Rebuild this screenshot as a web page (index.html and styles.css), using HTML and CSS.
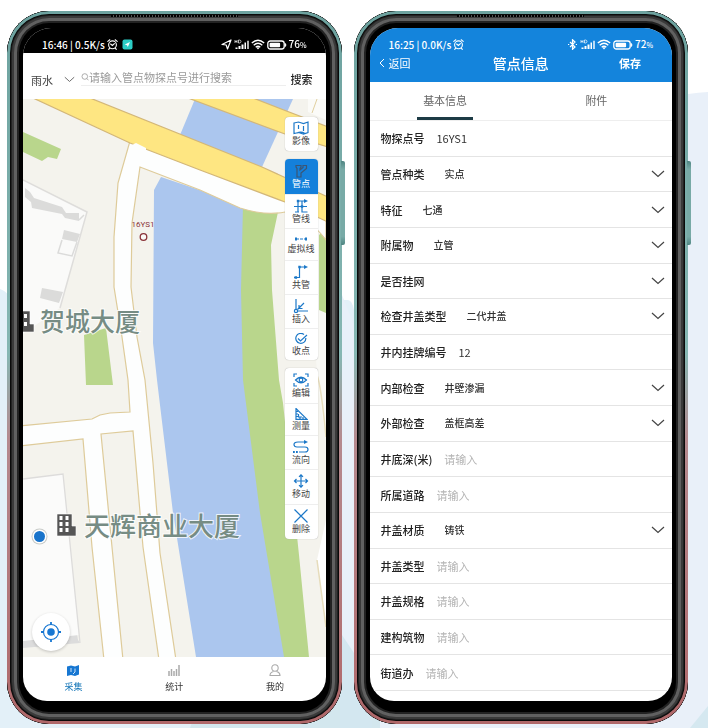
FILE: index.html
```html
<!DOCTYPE html>
<html lang="zh-CN">
<head>
<meta charset="utf-8">
<meta name="viewport" content="width=device-width, initial-scale=1">
<title>管点采集</title>
<link rel="stylesheet" href="styles.css">
</head>
<body>
<svg class="backdrop" viewBox="0 0 708 728" preserveAspectRatio="none" aria-hidden="true">
  <path d="M0 289Q6 291 9 296L348 300Q352 300 354 310V728H0Z" fill="#e3f0f8"/>
  <path d="M340 290L356 330V728H340Z" fill="#e8f0f9"/>
  <path d="M670 98Q688 93 708 92V728H350V400Z" fill="#e9f0f9"/>
  <path d="M190 728L200 700H380V728Z" fill="#d3e7ee"/>
  <path d="M340 632L372 680V728H340Z" fill="#d3e7f0"/>
  <path d="M690 728L708 706V728Z" fill="#d5e8f0"/>
</svg>

<svg class="defs" aria-hidden="true">
  <symbol id="alarm" viewBox="0 0 11 11"><g fill="none" stroke="currentColor" stroke-width="1.1" stroke-linecap="round"><circle cx="5.500" cy="5.800" r="3.900"/><path d="M.8 2.400L2.800.8M10.200 2.400L8.200.8M3.600 5L5.400 6.500L7.400 4.600M2.500 9.300L1.700 10.300M8.500 9.300L9.300 10.300"/></g></symbol>
  <symbol id="signal" viewBox="0 0 15 11"><g fill="currentColor"><path d="M1 1v3M3 1v3M1 2.500h2M4.500 1v3h1Q7 3.800 7 2.500T5.500 1Z" fill="none" stroke="currentColor" stroke-width=".7"/><path d="M1.500 8.500h2V10h-2zM4.500 7h2v3h-2zM7.500 5.500h2V10h-2zM10.500 3.500h1.500V10h-1.500zM13.300 1.800h1.400V10h-1.400z"/></g></symbol>
  <symbol id="wifi" viewBox="0 0 14 11"><g fill="none" stroke="currentColor" stroke-width="1.400"><path d="M.8 4Q7-1.400 13.200 4M2.700 6.200Q7 2.300 11.300 6.200M4.700 8.200Q7 6.200 9.300 8.200"/></g><path d="M5.500 8.800Q7 7.800 8.500 8.800L7 10.500Z" fill="currentColor"/></symbol>
  <symbol id="battery" viewBox="0 0 20 10"><rect x=".8" y="1" width="16.400" height="8" rx="2.500" fill="none" stroke="currentColor" stroke-width="1.300"/><rect x="2.600" y="2.800" width="10.500" height="4.400" rx="1" fill="currentColor"/><path d="M18.300 3.500Q19.600 5 18.300 6.500Z" fill="currentColor" stroke="currentColor"/></symbol>
  <symbol id="chevron" viewBox="0 0 14 8"><path d="M1 1L7 6.500L13 1" fill="none" stroke="currentColor" stroke-width="1.200"/></symbol>
</svg>

<main class="stage">
  <section class="phone" aria-label="地图采集">
    <i class="speaker"></i>
    <div class="screen">
      <div class="status status-dark">
        <span class="clock">16:46 | 0.5K/s</span>
        <svg class="i11"><use href="#alarm"/></svg>
        <svg class="i11 app" viewBox="0 0 11 11"><rect x=".5" y=".5" width="10" height="10" rx="2" fill="#2ccdc6"/><path d="M2.800 5.500L8 3L5.800 8L5 6.200Z" fill="#fff"/></svg>
        <span class="grow"></span>
        <svg class="i11" viewBox="0 0 11 11"><path d="M1 5.500L10 1L6.500 10L5.200 6Z" fill="none" stroke="currentColor" stroke-width="1.200" stroke-linejoin="round"/></svg>
        <svg class="i15"><use href="#signal"/></svg>
        <svg class="i14"><use href="#wifi"/></svg>
        <svg class="i20"><use href="#battery"/></svg>
        <span class="charge">76<small>%</small></span>
      </div>

      <form class="search" onsubmit="return false">
        <span class="kind">
          <select aria-label="管线类型"><option>雨水</option></select>
          <svg viewBox="0 0 14 8"><use href="#chevron"/></svg>
        </span>
        <label class="query">
          <svg viewBox="0 0 8 8"><circle cx="3.800" cy="3.500" r="2.800" fill="none" stroke="#999" stroke-width=".8"/><path d="M5.800 5.500L7.500 7.300" stroke="#999" stroke-width=".8"/></svg>
          <input type="text" aria-label="物探点号" placeholder="请输入管点物探点号进行搜索">
        </label>
        <button type="submit">搜索</button>
      </form>

      <div class="map">
        <svg class="tiles" viewBox="23 99 303 558" preserveAspectRatio="xMinYMin slice">
          <rect x="23" y="99" width="303" height="558" fill="#f4f3ed"/>
          <path d="M310 213L326 222V437Q318 400 314 330Z" fill="#f8f8f4"/>
          <path d="M317 560L326 627V520Z" fill="#fff"/>
          <path d="M317 375Q321 385 326 437M317 560L326 627" fill="none" stroke="#e6dcbb" stroke-width="1.500"/>
          <path d="M308 99H326V120L308 112Z" fill="#fbfbf8"/>
          <path d="M317 99L312 113" stroke="#e0cf9e"/>
          <!-- river -->
          <path d="M195 99H293L262 167L180 135Z" fill="#abc6ee"/>
          <path d="M161 177L154 190L153 343L157 380L163 430L173 513L196 657H285L261 513L244 380L242 290L244 205Z" fill="#abc6ee"/>
          <!-- green land -->
          <path d="M243 205L278 212L271 245L272 290L279 380L283 403L299 555L309 657H284L260 513L243 380L241 290Z" fill="#b9d68c"/>
          <path d="M319 235L326 228V313L319 310Z" fill="#b9d68c"/>
          <path d="M23 132L61 149L57 159L48 157L42 161L23 152ZM84 335L106 328L113 385H86Z" fill="#b9d68c"/>
          <!-- buildings -->
          <path d="M23 180L87 212L60 308L23 334Z" fill="#fafaf9"/>
          <path d="M23 180L87 212L60 308" fill="none" stroke="#dedddb" stroke-width="1.500"/>
          <path d="M25 188L30 192L34 198L62 207L66 213H79V221L65 218L62 214L32 208L31 202L25 197ZM64 230L80 234L77 242L62 239ZM42 288L63 292L59 303L40 298Z" fill="#dbdbda"/>
          <path d="M62 240L58 253L72 256L77 242M79 220L84 215" fill="none" stroke="#dbdbda" stroke-width="1.500"/>
          <path d="M23 640L77 634L78 640L80 643L23 648Z" fill="#dcdcdc"/>
          <path d="M23 479L63 474L79 635L23 641Z" fill="#fbfbfa"/>
          <path d="M23 479L63 474L80 643" fill="none" stroke="#dddcdb" stroke-width="1.300"/>
          <!-- side streets -->
          <path d="M130 141L118 183L114 237V287L122 337L128 380L130 412L110 413L100 415L92 419L20 426V446L83 439L92 547L104 660H123L112 547L101 434L133 431L143 547L159 660H176L160 553L153 463L145 380L137 337L131 287L132 223L140 167L200 190L240 208Q265 216 285 212Q306 214 326 240V200L240 165Z" fill="#fdfefe" stroke="#decb9a" stroke-width="1.200"/>
          <!-- main roads -->
          <path d="M33 98L130 143L200 170L285 202L328 222V197L262 167L90 98ZM188 98L285 134L328 147V127L253 98Z" fill="#fee682" stroke="#d3b779" stroke-width="1.200"/>
          <path d="M132 145L136 143L146 148V153L137 158Z" fill="#fdfefe"/>
          <!-- place names -->
          <g fill="#555" stroke="#fff" stroke-width=".6">
            <path d="M22 311h8v13h4v8H22Z"/><path d="M57 514h15v12h4v10H57Z"/>
          </g>
          <path d="M24 314h3v4h-3zM24 322h3v4h-3zM59.500 516h3v4h-3zM65.500 516h3v4h-3zM59.500 522h3v4h-3zM65.500 522h3v4h-3zM59.500 528h3v4h-3zM65.500 528h3v4h-3z" fill="#fff"/>
          <g class="place"><text x="40" y="331">贺城大厦</text><text x="84" y="536" class="long">天辉商业大厦</text></g>
          <text class="point" x="143" y="227">16YS1</text>
          <circle cx="143.500" cy="237" r="3.300" fill="#fff" fill-opacity=".6" stroke="#8a3339" stroke-width="1.300"/>
          <circle cx="39.500" cy="536.500" r="8" fill="#c8cbc8"/><circle cx="39.500" cy="536.500" r="7" fill="#fff"/><circle cx="39.500" cy="536.500" r="5.500" fill="#1974cb"/>
        </svg>

        <div class="tools">
          <div class="group"><button class="medium"><svg viewBox="0 0 16 14"><path d="M1 2L5.500 1L10.500 2.500L15 1V11.500L10.500 13L5.500 11.500L1 12.500ZM5.500 4V8M10.500 5V10M4 12Q8 10 12 12.500"/></svg>影像</button></div>
          <div class="group">
            <button class="tall on"><svg viewBox="0 0 16 14"><path d="M4 13V4.500L3 3V1.500H8V3L7 4.500V6L10 3.500V1.500H13.500V4.500L8 9V13Z" stroke="#3b5574"/></svg>管点</button>
            <button class="medium"><svg viewBox="0 0 16 14"><path d="M5 13V2H12M2 13H6M1 7.500H14M9 2V13H14.500"/><path class="solid" d="M11 0L15 2L11 4ZM3.800 .8h2.400v2.400H3.800zM7.800 6.300h2.400v2.400H7.800z"/></svg>管线</button>
            <button class="short"><svg class="low" viewBox="0 0 16 8"><path d="M3 4H13" stroke-dasharray="3 1"/><path class="solid" d="M2 2.500h2v3H2zM12 2.500h2v3h-2z"/></svg>虚拟线</button>
            <button class="medium"><svg viewBox="0 0 16 14"><path d="M1 12.500H6.500V2H12"/><path class="solid" d="M11 0L15 2L11 4ZM1.500 11.200h2.600v2.600H1.500zM5.300 .8h2.400v2.400H5.300z"/></svg>共管</button>
            <button class="medium"><svg viewBox="0 0 16 14"><path d="M3 10.500V0M4.500 12H15M4.500 10.500L11 4M6 6V9.500H9.500"/><circle cx="3" cy="12" r="1.600"/></svg>插入</button>
            <button class="short"><svg class="small" viewBox="0 0 14 12"><path d="M10 1.500A5 5 0 1 0 11.800 5M4 5.500L6.500 8L13 2"/></svg>收点</button>
          </div>
          <div class="group">
            <button class="tall"><svg viewBox="0 0 16 14"><path d="M1 4V1H4M12 1H15V4M15 10V13H12M4 13H1V10M2.500 7Q8 1.500 13.500 7Q8 12.500 2.500 7Z"/><circle cx="8" cy="7" r="1.800"/></svg>编辑</button>
            <button class="short"><svg class="small" viewBox="0 0 14 12"><path d="M2 .5V11.300H13ZM4.500 6V9H8M2 3.500H4M2 6H4M2 8.500H4M6 11V9M9 11V9"/></svg>测量</button>
            <button class="medium"><svg viewBox="0 0 16 14"><path d="M5 2H12M5 2Q1 2 1 4.500T4 7H12Q15 7 15 9.500T12 12H6"/><path class="solid" d="M11 0L15 2L11 4ZM0 11h1.800v2H0zM3 11h1.800v2H3z"/></svg>流向</button>
            <button class="tall"><svg viewBox="0 0 16 14"><path d="M8 .8V13.200M1.500 7H14.500M6 2.800L8 .8L10 2.800M6 11.200L8 13.200L10 11.200M3.500 5L1.500 7L3.500 9M12.500 5L14.500 7L12.500 9"/></svg>移动</button>
            <button class="tall"><svg viewBox="0 0 16 14"><path d="M1.500 .5L14.500 13.500M14.500 .5L1.500 13.500"/></svg>删除</button>
          </div>
        </div>

        <button class="locate" aria-label="定位"><svg viewBox="0 0 20 20"><circle cx="10" cy="10" r="7.500" fill="none" stroke="#1777d2" stroke-width="1.200"/><circle cx="10" cy="10" r="3.800" fill="#1777d2"/><path d="M10 0V3M10 17V20M0 10H3M17 10H20" stroke="#1777d2" stroke-width="1.800"/></svg></button>
      </div>

      <nav class="tabbar">
        <a href="#collect" class="on"><svg viewBox="0 0 14 13"><path d="M1 2.500L5 1.500L9 2.500L13 1V10.500L9 12L5 11L1 12Z" fill="#1777d2"/><path d="M5 4V8M9 4.500V8L7 10" fill="none" stroke="#fff" stroke-width=".8"/></svg>采集</a>
        <a href="#stats"><svg viewBox="0 0 14 13"><path d="M2 7V12M4.500 5V12M7 7V12M9.500 5V12M12 1V12" stroke="#aaa" stroke-width="1.500"/></svg>统计</a>
        <a href="#me"><svg viewBox="0 0 14 13"><g fill="none" stroke="#aaa" stroke-width="1.100"><circle cx="7" cy="4" r="3.200"/><path d="M5.500 7.500Q2 8.500 2 11.500H12Q12 8.500 8.500 7.500"/></g></svg>我的</a>
      </nav>
    </div>
  </section>

  <section class="phone" aria-label="管点信息">
    <i class="speaker"></i>
    <div class="screen">
      <header class="top">
        <div class="status">
          <span class="clock">16:25 | 0.0K/s</span>
          <svg class="i11"><use href="#alarm"/></svg>
          <span class="grow"></span>
          <svg class="i11" viewBox="0 0 11 11"><path d="M3 3L8 8L5.500 10.300V.7L8 3L3 8M1 5.500h1.200M8.800 5.500H10" fill="none" stroke="currentColor" stroke-width="1.200"/></svg>
          <svg class="i15"><use href="#signal"/></svg>
          <svg class="i14"><use href="#wifi"/></svg>
          <svg class="i20"><use href="#battery"/></svg>
          <span class="charge">72<small>%</small></span>
        </div>
        <div class="titlebar">
          <button class="back"><svg viewBox="0 0 6 10"><path d="M5 1L1 5L5 9" fill="none" stroke="currentColor"/></svg>返回</button>
          <h1>管点信息</h1>
          <button class="save">保存</button>
        </div>
      </header>
      <div class="tabs" role="tablist">
        <button role="tab" aria-selected="true"><span>基本信息</span></button>
        <button role="tab" aria-selected="false"><span>附件</span></button>
      </div>
      <form class="fields">
        <div class="row"><label for="f1">物探点号</label><input id="f1" type="text" value="16YS1"></div>
        <div class="row"><label for="f2">管点种类</label><select id="f2"><option>实点</option></select><svg><use href="#chevron"/></svg></div>
        <div class="row"><label for="f3">特征</label><select id="f3"><option>七通</option></select><svg><use href="#chevron"/></svg></div>
        <div class="row"><label for="f4">附属物</label><select id="f4"><option>立管</option></select><svg><use href="#chevron"/></svg></div>
        <div class="row"><label for="f5">是否挂网</label><select id="f5"><option></option></select><svg><use href="#chevron"/></svg></div>
        <div class="row"><label for="f6">检查井盖类型</label><select id="f6"><option>二代井盖</option></select><svg><use href="#chevron"/></svg></div>
        <div class="row"><label for="f7">井内挂牌编号</label><input id="f7" type="text" value="12"></div>
        <div class="row"><label for="f8">内部检查</label><select id="f8"><option>井壁渗漏</option></select><svg><use href="#chevron"/></svg></div>
        <div class="row"><label for="f9">外部检查</label><select id="f9"><option>盖框高差</option></select><svg><use href="#chevron"/></svg></div>
        <div class="row"><label for="f10">井底深(米)</label><input id="f10" type="text" placeholder="请输入"></div>
        <div class="row"><label for="f11">所属道路</label><input id="f11" type="text" placeholder="请输入"></div>
        <div class="row"><label for="f12">井盖材质</label><select id="f12"><option>铸铁</option></select><svg><use href="#chevron"/></svg></div>
        <div class="row"><label for="f13">井盖类型</label><input id="f13" type="text" placeholder="请输入"></div>
        <div class="row"><label for="f14">井盖规格</label><input id="f14" type="text" placeholder="请输入"></div>
        <div class="row"><label for="f15">建构筑物</label><input id="f15" type="text" placeholder="请输入"></div>
        <div class="row"><label for="f16">街道办</label><input id="f16" type="text" placeholder="请输入"></div>
      </form>
    </div>
  </section>
</main>
</body>
</html>
```
FILE: styles.css
```css
* { box-sizing: border-box; }

body {
  margin: 0;
  background: #fff;
  color: #333;
  font: 11px/16px "Noto Sans CJK SC", sans-serif;
}

button, input, select {
  margin: 0;
  padding: 0;
  border: 0;
  border-radius: 0;
  background: none;
  color: inherit;
  font: inherit;
  outline: 0;
  appearance: none;
}

a { color: inherit; text-decoration: none; }
svg { flex: none; display: block; }

.defs { display: none; }

.backdrop {
  position: fixed;
  inset: 0;
  z-index: -1;
  width: 100%;
  height: 100%;
}

.stage {
  display: flex;
  gap: 12px;
  min-height: 100vh;
  padding: 11px 20px 4px 7px;
}

/* Handset: metal rim, grey bezel rings and the black surround */
.phone {
  position: relative;
  display: flex;
  flex: 1;
  min-width: 0;
  padding: 17px 16px 23px;
  border-radius: 42px;
  background: #000;
  box-shadow:
    inset 0 0 0 4px #0a0a0a,
    inset 0 0 0 5px #222,
    inset 0 0 0 7px #3a3a3a,
    inset 0 0 0 10px #606060,
    inset 0 0 0 12px #222;
}

.phone::before {
  content: "";
  position: absolute;
  inset: 0;
  border: 3px solid transparent;
  border-radius: 42px;
  background: linear-gradient(#6da29f 0, #86b7b3 48%, #b58a8f 60%, #b0686a 100%) border-box;
  mask: linear-gradient(#000 0 0) padding-box exclude, linear-gradient(#000 0 0);
}

.phone::after {
  content: "";
  position: absolute;
  top: 150px;
  right: -3px;
  width: 4px;
  height: 84px;
  border-radius: 0 2px 2px 0;
  background: linear-gradient(#4f8582, #78aaa6 10%, #78aaa6 90%, #4f8582);
}

.speaker {
  position: absolute;
  top: 4px;
  left: 31%;
  width: 38%;
  height: 2px;
  background: repeating-linear-gradient(90deg, #000 0 2px, #555 2px 3px);
}

.screen {
  position: relative;
  display: flex;
  flex: 1;
  flex-direction: column;
  min-width: 0;
  overflow: hidden;
  border-radius: 28px 28px 24px 24px;
  background: #fff;
}

.status {
  display: flex;
  flex: none;
  align-items: center;
  gap: 2px;
  height: 25px;
  padding: 8px 19px 0;
  color: #fff;
}

.status-dark { background: #000; }
.clock { font-size: 10px; font-weight: 500; white-space: nowrap; }
.grow { flex: 1; }
.app { margin-left: 2px; }
.charge { font-size: 10px; font-weight: 500; }
.charge small { font-size: 7px; }
.i11 { width: 11px; height: 11px; }
.i14 { width: 14px; height: 11px; }
.i15 { width: 15px; height: 11px; }
.i20 { width: 20px; height: 10px; }

/* Search row */
.search {
  display: flex;
  flex: none;
  align-items: center;
  height: 46px;
  padding: 3px 13px 0 8px;
}

.kind { display: flex; align-items: center; width: 50px; padding-top: 4px; }
.kind select { width: 33px; color: #444; }
.kind svg { width: 11px; height: 7px; color: #666; }

.query {
  display: flex;
  flex: 1;
  align-items: center;
  min-width: 0;
  margin-right: 5px;
  border-bottom: 1px solid #eee;
}

.query svg { width: 8px; height: 8px; }
.query input { flex: 1; min-width: 0; }
.query input::placeholder { color: #999; opacity: 1; }
.search button { padding-top: 2px; color: #222; font-weight: 500; }

/* Map */
.map { position: relative; flex: 1; min-height: 480px; overflow: hidden; }
.tiles { position: absolute; inset: 0; width: 100%; height: 100%; }

.place {
  fill: #768c84;
  font-size: 25px;
  font-weight: 500;
  paint-order: stroke;
  stroke: #fff;
  stroke-opacity: .8;
  stroke-width: 2px;
}

.place .long { font-size: 26px; }
.point { fill: #8a3339; font: 8px Roboto, sans-serif; text-anchor: middle; }

.tools {
  position: absolute;
  top: 18px;
  right: 8px;
  display: flex;
  flex-direction: column;
  gap: 8px;
  width: 33px;
}

.group {
  display: flex;
  flex-direction: column;
  overflow: hidden;
  border-radius: 4px;
  background: #fff;
  box-shadow: 0 0 1px #999;
}

.group button {
  display: flex;
  flex-direction: column;
  align-items: center;
  justify-content: center;
  color: #444;
  font-size: 9px;
  line-height: 12px;
  white-space: nowrap;
}

.group button + button { border-top: 1px solid #eee; }
.group .tall { height: 35px; }
.group .medium { height: 34px; }
.group .short { height: 32px; }
.group .on { background: #1480db; color: #fff; }
.group svg { width: 16px; height: 14px; fill: none; stroke: #1c78c8; stroke-width: 1.2; }
.group .low { height: 8px; }
.group .small { width: 14px; height: 12px; }
.group .solid { fill: #1c78c8; stroke: none; }

.locate {
  position: absolute;
  bottom: 6px;
  left: 9px;
  display: grid;
  place-items: center;
  width: 38px;
  height: 38px;
  border-radius: 50%;
  background: #fff;
  box-shadow: 0 1px 3px #0003;
}

.locate svg { width: 20px; height: 20px; }

.tabbar {
  display: grid;
  flex: none;
  grid-template-columns: repeat(3, 1fr);
  height: 44px;
  font-size: 9px;
  line-height: 14px;
}

.tabbar a { display: flex; flex-direction: column; align-items: center; gap: 3px; padding-top: 7px; }
.tabbar .on { color: #1777b8; }
.tabbar svg { width: 14px; height: 13px; }

/* Detail form */
.top { flex: none; background: #1484dc; color: #fff; }

.titlebar {
  display: grid;
  grid-template-columns: 1fr auto 1fr;
  align-items: center;
  height: 29px;
  padding: 0 31px 9px 9px;
}

.titlebar h1 { margin: 0 0 0 22px; font-size: 14px; font-weight: 500; line-height: 20px; }
.back { display: flex; align-items: center; gap: 4px; }
.back svg { width: 6px; height: 10px; }
.save { justify-self: end; font-weight: 700; }

.tabs {
  display: grid;
  flex: none;
  grid-template-columns: 1fr 1fr;
  height: 39px;
  border-bottom: 1px solid #eee;
  color: #666;
}

.tabs button { display: grid; justify-items: center; }
.tabs span { display: grid; align-items: center; width: 56px; height: 38px; border-bottom: 3px solid transparent; }
.tabs [aria-selected="true"] span { border-color: #1d3b45; }

.fields {
  display: grid;
  flex: 1;
  grid-auto-rows: minmax(28px, 1fr);
  padding-bottom: 10px;
}

.row {
  display: flex;
  align-items: center;
  gap: 12px;
  padding: 0 7px 0 11px;
  border-bottom: 1px solid #e4e4e4;
}

.row label { color: #222; font-weight: 500; white-space: nowrap; }
.row input, .row select { flex: 1; min-width: 0; color: #333; }
.row select { padding-left: 8px; font-size: 10px; font-weight: 500; }
.row input::placeholder { color: #b4b4b4; opacity: 1; }
.row svg { width: 14px; height: 8px; color: #444; }
```
